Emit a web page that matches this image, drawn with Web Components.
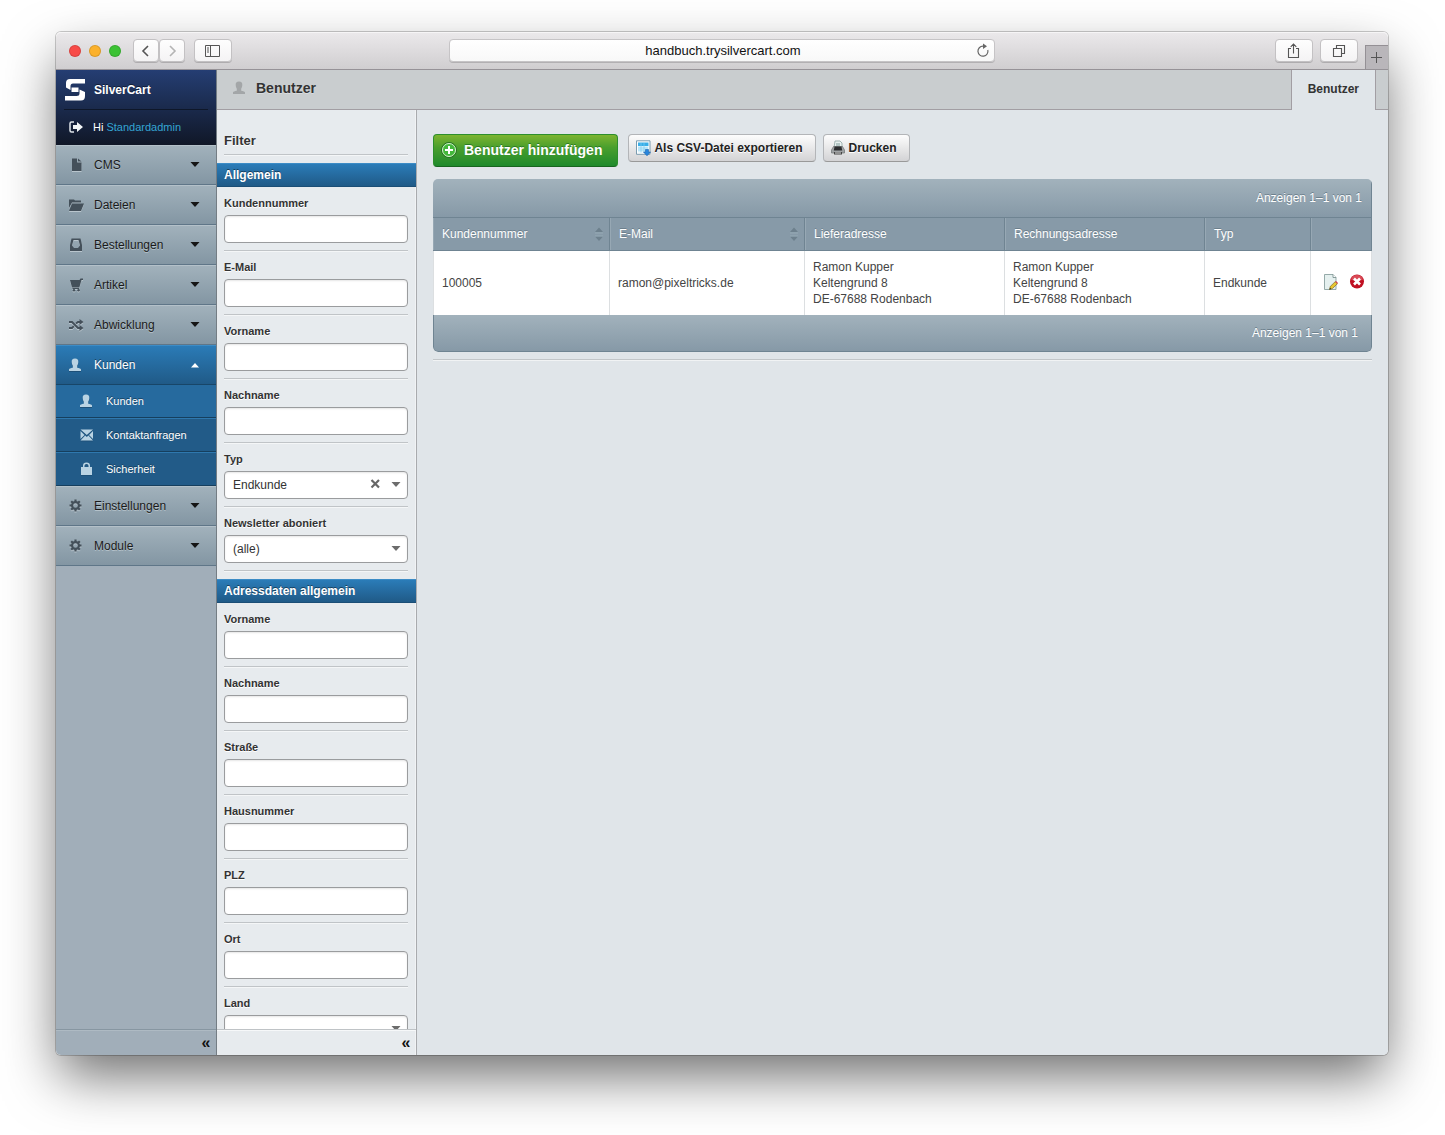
<!DOCTYPE html>
<html lang="de">
<head>
<meta charset="utf-8">
<title>SilverCart – Benutzer</title>
<style>
  body {
    margin: 0;
    box-sizing: border-box;
    height: 100vh;
    padding: 32px 57px 80px 56px;
    overflow: hidden;
    background: #fff;
    color: #333;
    font: 12px/16px "Liberation Sans", Arial, sans-serif;
    --blue: linear-gradient(#2b7cb8, #205a87);
    --steel: linear-gradient(#a2b2bc, #8396a3);
    --panel: #e7ebee;
    --page: #e0e5e9;
    --line: #a29ea3;
  }
</style>
</head>
<body>
<browser-window address="handbuch.trysilvercart.com">
  <admin-app></admin-app>
</browser-window>

<script>
const ICONS = {
  back: '<path d="M10 3 5 8l5 5" fill="none" stroke="#555" stroke-width="1.6"/>',
  forward: '<path d="M6 3l5 5-5 5" fill="none" stroke="#b4b4b4" stroke-width="1.6"/>',
  panel: '<path d="M.5 2.5h14v11H.5zM5.500 2.500v11M2 5h2M2 7h2M2 9h2" fill="none" stroke="#555"/>',
  share: '<path d="M5 5.500H2.500v9h10v-9H10M7.500 10.500V1M4.700 3.800 7.500 1l2.800 2.800" fill="none" stroke="#555" stroke-width="1.100"/>',
  tabs: '<path d="M2.500 5.500h8v8h-8zM5.500 5V2.500h8v8H11" fill="none" stroke="#555" stroke-width="1.100"/>',
  plus: '<path d="M7.500 2v11M2 7.500h11" stroke="#555"/>',
  reload: '<path d="M12.800 7A5 5 0 1 1 8 3.200h1" fill="none" stroke="#666" stroke-width="1.200"/><path d="M8 .5 12 3.200 8 6z" fill="#666"/>',
  logo: '<path d="M5 0H20V4.500H8Q5.500 4.500 5.500 7V11L1 8.500V4Q1 0 5 0zM6.500 8.500H13.500V13H6.500zM14.500 10.500 20 13V17Q20 21.500 16 21.500H0V17H11.500Q14.500 17 14.500 14.500z" fill="#fff"/>',
  logout: '<path d="M6 3H3.500Q2 3 2 4.500v7Q2 13 3.500 13H6" fill="none" stroke="#dfe5ea" stroke-width="1.500"/><path d="M5 6h4V3l6 5-6 5v-3H5z" fill="#f2f5f7"/>',
  file: '<path d="M4 1.500h5v4h4.500V14H4zM10 1.500l3.500 3H10z"/>',
  folder: '<path d="M1 2.500h5l1 1h6v2H4L1 11zM4 6.500h12L13 14H1z"/>',
  inbox: '<path d="M3.500 1.500h9L14 8v6H2V8zM5.500 3 4 8.500 6 11h4l2-2.500L10.500 3z" fill-rule="evenodd"/>',
  cart: '<path d="M2 3h9.500l1-1.500H15V3h-1.500l-2.200 7.500H4zM4.500 11H11v1H4.500z"/><circle cx="6" cy="13.300" r="1.200"/><circle cx="10.500" cy="13.300" r="1.200"/>',
  shuffle: '<path d="M1 5h3l6 6h3M1 11h3l1.800-1.800M8 6.500 10 5h3" fill="none" stroke="currentColor" stroke-width="1.900"/><path d="M11.500 2 15.500 5l-4 3zM11.500 8l4 3-4 3z"/>',
  user: '<path d="M7 1.500c2.600 0 3.400 1.400 3.300 3.500C10.200 7 9.700 8 9.200 8.700V10.500c.3.700 3.800.6 3.800 2V14H1v-1.500c0-1.400 3.500-1.300 3.800-2V8.700C4.300 8 3.800 7 3.700 5 3.600 2.900 4.400 1.500 7 1.500z"/>',
  mail: '<path d="M1.500 2.500h12.500L7.800 8zM1.500 4 5.500 8 1.500 12zM14 4V12L10 8zM6.200 8.500 7.800 10l1.600-1.500L14 13.500H1.500z"/>',
  lock: '<path d="M2 6H4V4.500q0-3 3.500-3t3.500 3V6h2v8H2zM5.500 6h4V4.700Q9.500 3 7.500 3t-2 1.700z" fill-rule="evenodd"/>',
  gear: '<path d="M7.500 1.500V4M7.500 11v2.500M1.500 7.500H4M11 7.500h2.500M3.200 3.200 5 5M10 10l1.800 1.800M3.200 11.800 5 10M10 5l1.800-1.800" stroke="currentColor" stroke-width="2.200"/><circle cx="7.500" cy="7.500" r="3.400" fill="none" stroke="currentColor" stroke-width="2.200"/>',
  down: '<path d="M3.500 5h9L8 10z"/>',
  up: '<path d="M4 10.500h8L8 6z"/>',
  clear: '<path d="M3.500 3l7.500 7.500M11 3l-7.500 7.500" stroke="#666" stroke-width="2.200"/>',
  sort: '<path d="M4 6h8L8 1.500zM4 10.500h8L8 15z" fill="#6d808d"/><path d="M4 7h8M4 10h8" stroke="#9badb8" stroke-width=".8"/>',
  add: '<circle cx="8" cy="8" r="7.500" fill="#37a52f" stroke="#2a7026"/><circle cx="8" cy="8" r="6.500" fill="#43b83a" stroke="#d6f3cd"/><path d="M8 4v8M4 8h8" stroke="#fff" stroke-width="2"/>',
  csv: '<path d="M1.500 .8h13.500v13.500H1.500z" fill="#fff" stroke="#7b9cb0"/><path d="M3 2.500h10.500v3.500H3z" fill="#38aee8"/><path d="M3 6h10.500v6.500H3z" fill="#d9f2fc"/><path d="M3 8h10M3 10h10M6 3v9.500M9 3v9.500" stroke="#7fcdf0" stroke-width=".7"/><path d="M10.500 9.500h3v2.500h2L12 15.800 8.500 12h2z" fill="#2786dc" stroke="#1b62ad" stroke-width=".6"/>',
  print: '<path d="M5 1h5l2 2v5H4z" fill="#e9f1f0" stroke="#8ea5a2" stroke-width=".8"/><path d="M6 4h4M6 6h4" stroke="#7f9b99"/><path d="M3.500 6.500h9l2 3.500v3H1.500v-3z" fill="#a0a3a5" stroke="#6f7274" stroke-width=".7"/><path d="M4.500 6.500h7l.7 4H3.800z" fill="#2c2e30"/><path d="M4 12h8v2.500H4z" fill="#444"/><path d="M5 13h6" stroke="#ddd"/>',
  edit: '<path d="M1.500 .5h8.500l3 3v12H1.500z" fill="#e5f0ef" stroke="#8aa09f" stroke-width=".9"/><path d="M10 .5v3h3" fill="#fff" stroke="#6f8685" stroke-width=".8"/><path d="M6.500 15.500 7.200 12.500 12.200 7.700 14.400 9.700 9.400 14.600z" fill="#e8c630" stroke="#6d5a1a" stroke-width=".6"/><path d="M12.200 7.700 13 7l2 2-.7.700z" fill="#d9364a"/><path d="M6.500 15.500 7 13.800 8.200 15z" fill="#222"/>',
  remove: '<circle cx="8" cy="7.500" r="7" fill="#c01022"/><path d="M2 5.500a6.300 6.300 0 0 1 12 0q-6 3-12 0z" fill="#d94a56"/><path d="M5 4.500l6 6M11 4.500l-6 6" stroke="#fff" stroke-width="2.600"/>'
};

const define = (name, template) => customElements.define(name, class extends HTMLElement {
  connectedCallback() {
    if (this.shadowRoot) return;
    const root = this.attachShadow({ mode: 'open' });
    root.innerHTML = '<style>*{box-sizing:border-box}button,input,select{font:inherit;color:inherit;margin:0}button{cursor:pointer}a{color:inherit;text-decoration:none}</style>'
      + (typeof template === 'function' ? template(this) : template);
  }
});

define('ui-icon', el => {
  const name = el.getAttribute('name');
  const logo = name === 'logo';
  return `<style>
    :host { display: block; flex: none; width: ${logo ? 20 : 16}px; height: ${logo ? 22 : 16}px; }
    svg { display: block; width: 100%; height: 100%; }
  </style><svg viewBox="0 0 ${logo ? '20 22' : '16 16'}" fill="currentColor" aria-hidden="true">${ICONS[name]}</svg>`;
});

define('tool-button', el => `<style>
    :host { display: block; }
    button {
      display: flex; align-items: center; justify-content: center;
      width: 100%; height: 23px; padding: 0;
      border: 1px solid #c3c1c3; border-radius: 4px;
      background: linear-gradient(#fefefe, #f4f3f4);
      box-shadow: 0 1px 0 #aeacae;
    }
  </style><button type="button" aria-label="${el.getAttribute('label')}"><ui-icon name="${el.getAttribute('icon')}"></ui-icon></button>`);

define('browser-window', el => `<style>
    :host {
      display: flex; flex-direction: column; height: 100%; border-radius: 5px;
      box-shadow: 0 0 0 1px rgba(0,0,0,.2), 0 24px 54px -3px rgba(0,0,0,.57);
    }
    header {
      flex: none; display: grid; grid-template-columns: 1fr 41% 1fr; align-items: center;
      height: 38px; border-bottom: 1px solid #969297; border-radius: 5px 5px 0 0;
      background: linear-gradient(#ebe9eb, #d0ced0); box-shadow: inset 0 1px #f6f5f6;
    }
    .left, .right { display: flex; align-items: center; }
    .left { padding-left: 13px; }
    .light { width: 12px; height: 12px; margin-right: 8px; border-radius: 50%; background: var(--c); box-shadow: inset 0 0 0 1px rgba(0,0,0,.13); }
    .step { width: 26px; }
    .first { margin-left: 4px; }
    .wide { width: 38px; }
    .side { margin-left: 9px; }
    .address {
      display: flex; align-items: center; height: 23px; padding: 0 3px;
      border: 1px solid #c6c4c6; border-radius: 4px; background: linear-gradient(#fff, #f8f8f8);
      box-shadow: 0 1px 0 #b2b0b2;
    }
    .address input { flex: 1; min-width: 0; border: 0; padding: 0 0 0 18px; outline: 0; background: none; font-size: 13px; color: #111; text-align: center; }
    .right { justify-content: flex-end; gap: 7px; align-self: stretch; }
    .new { align-self: flex-end; display: flex; align-items: center; justify-content: center; width: 23px; height: 24px; padding: 0; border: solid #949095; border-width: 1px 0 0 1px; background: #b9b6ba; }
    main { flex: 1; min-height: 0; display: flex; overflow: hidden; border-radius: 0 0 5px 5px; }
  </style>
  <header>
    <div class="left">
      <span class="light" style="--c:#f84b48"></span><span class="light" style="--c:#fbb12c"></span><span class="light" style="--c:#3cc234"></span>
      <tool-button class="step first" icon="back" label="Zurück"></tool-button><tool-button class="step" icon="forward" label="Vorwärts"></tool-button>
      <tool-button class="wide side" icon="panel" label="Seitenleiste"></tool-button>
    </div>
    <div class="address"><input type="text" aria-label="Adresse" value="${el.getAttribute('address')}"><ui-icon name="reload"></ui-icon></div>
    <div class="right">
      <tool-button class="wide" icon="share" label="Teilen"></tool-button>
      <tool-button class="wide" icon="tabs" label="Tabs"></tool-button>
      <button class="new" type="button" aria-label="Neuer Tab"><ui-icon name="plus"></ui-icon></button>
    </div>
  </header>
  <main><slot></slot></main>`);

define('admin-app', `<style>
    :host { flex: 1; min-width: 0; display: flex; background: var(--page); }
    .work { flex: 1; min-width: 0; display: flex; flex-direction: column; }
    .body { flex: 1; min-height: 0; display: flex; }
  </style>
  <side-nav></side-nav>
  <div class="work"><page-header></page-header>
    <div class="body"><filter-panel></filter-panel><user-list></user-list></div>
  </div>`);

define('collapse-bar', `<style>
    :host { flex: none; display: flex; justify-content: flex-end; height: 26px; padding-right: 5px; border-top: 1px solid var(--bar-line); box-shadow: inset 0 1px var(--bar-light); }
    button { width: 10px; padding: 0; border: 0; background: none; color: #111; font-size: 16px; line-height: 22px; font-weight: bold; }
  </style><button type="button" aria-label="Einklappen">«</button>`);

define('nav-item', el => {
  const sub = el.hasAttribute('sub'), active = el.hasAttribute('active'), arrow = el.getAttribute('arrow');
  const blue = sub || active;
  return `<style>
    :host { display: block; }
    a {
      display: flex; align-items: center;
      gap: 10px; height: 40px; padding: 0 13px 0 12px; color: ${blue ? '#fff' : '#1a1a1a'};
      background: ${active ? 'var(--blue)' : 'var(--steel)'};
      border-bottom: 1px solid ${active ? '#184668' : '#5f7688'};
      box-shadow: inset 0 1px ${active ? '#3c8cc6' : '#b4c1c9'};
      text-shadow: ${blue ? '0 -1px #17415f' : '0 1px #b5c2ca'};
    }
    ui-icon { color: ${blue ? '#b9d3e3' : '#44505a'}; filter: drop-shadow(0 1px ${blue ? '#1d5078' : '#b9c5cd'}); }
    span { flex: 1; }
    .arrow { color: ${blue ? '#fff' : '#151515'}; filter: none; }
    ${sub ? `a { height: 34px; gap: 11px; padding-left: 23px; font-size: 11px; background: ${active ? '#266a9e' : '#225b88'}; border-bottom-color: #163f5e; box-shadow: inset 0 1px #2f78ae; }
      :host([active]) a { height: 33px; box-shadow: none; }` : ''}
  </style><a href="#"><ui-icon name="${el.getAttribute('icon')}"></ui-icon><span><slot></slot></span>${arrow ? `<ui-icon class="arrow" name="${arrow}"></ui-icon>` : ''}</a>`;
});

define('side-nav', `<style>
    :host { flex: none; width: 161px; display: flex; flex-direction: column; background: #a1aeb9; border-right: 1px solid #747d84; --bar-line: #8796a1; --bar-light: #aebac3; }
    .brand { background: linear-gradient(#253e73, #101727); color: #fff; }
    .name { display: flex; align-items: center; gap: 9px; height: 39px; padding-left: 9px; font-weight: bold; text-shadow: 0 -1px #111d36; }
    .user { display: flex; align-items: center; gap: 9px; height: 36px; margin: 0 8px; padding: 0 0 2px 4px; border-top: 1px solid #0e1729; font-size: 11px; }
    .user a { color: #34a5d3; }
    nav { flex: 1; min-height: 0; overflow: hidden; }
  </style>
  <div class="brand">
    <div class="name"><ui-icon name="logo"></ui-icon><span>SilverCart</span></div>
    <div class="user"><ui-icon name="logout"></ui-icon><span>Hi <a href="#">Standardadmin</a></span></div>
  </div>
  <nav>
    <nav-item icon="file" arrow="down">CMS</nav-item>
    <nav-item icon="folder" arrow="down">Dateien</nav-item>
    <nav-item icon="inbox" arrow="down">Bestellungen</nav-item>
    <nav-item icon="cart" arrow="down">Artikel</nav-item>
    <nav-item icon="shuffle" arrow="down">Abwicklung</nav-item>
    <nav-item icon="user" arrow="up" active>Kunden</nav-item>
    <nav-item sub active icon="user">Kunden</nav-item>
    <nav-item sub icon="mail">Kontaktanfragen</nav-item>
    <nav-item sub icon="lock">Sicherheit</nav-item>
    <nav-item icon="gear" arrow="down">Einstellungen</nav-item>
    <nav-item icon="gear" arrow="down">Module</nav-item>
  </nav>
  <collapse-bar></collapse-bar>`);

define('page-header', `<style>
    :host { flex: none; display: flex; height: 40px; font-weight: bold; }
    .title, .tail { background: #c9cdcf; border-bottom: 1px solid var(--line); }
    .title { flex: 1; display: flex; align-items: center; gap: 8px; padding: 0 0 3px 15px; }
    .title ui-icon { color: #a3a6a8; }
    h1 { margin: 0; font-size: 14px; line-height: 16px; text-shadow: 0 1px #dadddf; }
    a { display: flex; align-items: center; padding: 0 16px 2px; border: solid var(--line); border-width: 0 1px; background: var(--page); }
    .tail { width: 12px; }
  </style>
  <div class="title"><ui-icon name="user"></ui-icon><h1>Benutzer</h1></div><a href="#">Benutzer</a><div class="tail"></div>`);

define('filter-field', el => {
  const type = el.getAttribute('type'), value = el.getAttribute('value') || '';
  return `<style>
    :host { display: block; margin: 0 8px 0 7px; padding: 8px 0 7px; border-bottom: 1px solid #c0c4c7; box-shadow: 0 1px #f4f6f7; }
    label { display: block; margin-bottom: 4px; font-size: 11px; font-weight: bold; text-shadow: 0 1px #fff; }
    input, .box { display: block; width: 100%; height: 28px; border: 1px solid #9a9c9e; border-radius: 4px; background: #fff; box-shadow: inset 0 1px 2px rgba(0,0,0,.1); }
    input { padding: 0 8px; }
    .box { display: grid; grid-template-columns: 1fr 16px 4px 16px 3px; align-items: center; }
    select { grid-area: 1 / 1 / 2 / -1; height: 26px; padding: 0 0 0 8px; border: 0; appearance: none; background: none; }
    .box button { grid-area: 1 / 2; padding: 0; border: 0; background: none; }
    .box > ui-icon { grid-area: 1 / 4; color: #6c6c6c; pointer-events: none; }
  </style>
  <label for="f">${el.getAttribute('label')}</label>
  ${type === 'select'
    ? `<div class="box"><select id="f"><option>${value}</option></select>${el.hasAttribute('clearable') ? '<button type="button" aria-label="Auswahl löschen"><ui-icon name="clear"></ui-icon></button>' : ''}<ui-icon name="down"></ui-icon></div>`
    : '<input id="f" type="text">'}`;
});

define('filter-section', el => `<style>
    :host { display: block; margin-top: 8px; }
    h3 { margin: 0; height: 24px; padding: 0 7px; font-size: 12px; line-height: 22px; color: #fff; background: var(--blue); border: solid #3c8cc6; border-width: 1px 0; border-bottom-color: #1b4e76; text-shadow: 0 -1px #17415f; }
  </style><h3>${el.getAttribute('heading')}</h3><slot></slot>`);

define('filter-panel', `<style>
    :host { flex: none; width: 200px; display: flex; flex-direction: column; background: var(--panel); border-right: 1px solid #a9abae; box-shadow: inset -1px 0 #f1f3f5; --bar-line: #bfc3c6; --bar-light: #f6f8f9; }
    .scroll { flex: 1; min-height: 0; overflow: hidden; }
    h2 { margin: 0 8px 0 7px; height: 45px; padding-top: 23px; font-size: 13px; line-height: 16px; border-bottom: 1px solid #c0c4c7; box-shadow: 0 1px #f4f6f7; text-shadow: 0 1px #fff; }
  </style>
  <form class="scroll">
    <h2>Filter</h2>
    <filter-section heading="Allgemein">
      <filter-field label="Kundennummer"></filter-field>
      <filter-field label="E-Mail"></filter-field>
      <filter-field label="Vorname"></filter-field>
      <filter-field label="Nachname"></filter-field>
      <filter-field label="Typ" type="select" value="Endkunde" clearable></filter-field>
      <filter-field label="Newsletter aboniert" type="select" value="(alle)"></filter-field>
    </filter-section>
    <filter-section heading="Adressdaten allgemein">
      <filter-field label="Vorname"></filter-field>
      <filter-field label="Nachname"></filter-field>
      <filter-field label="Straße"></filter-field>
      <filter-field label="Hausnummer"></filter-field>
      <filter-field label="PLZ"></filter-field>
      <filter-field label="Ort"></filter-field>
      <filter-field label="Land" type="select"></filter-field>
    </filter-section>
  </form>
  <collapse-bar></collapse-bar>`);

define('action-button', el => `<style>
    :host { display: block; }
    button {
      display: flex; align-items: center; gap: 3px; height: 28px; padding: 0 12px 0 6px;
      border: 1px solid #b3b5b8; border-bottom-color: #999; border-radius: 4px;
      background: linear-gradient(#fdfdfd, #d3d3d5); color: #222; font-weight: bold; white-space: nowrap; text-shadow: 0 1px #fff;
    }
    :host([primary]) button {
      height: 33px; gap: 7px; padding: 0 15px 1px 7px; font-size: 14px; color: #fff;
      border-color: #2d8f2c; border-bottom-color: #17651f; background: linear-gradient(#7db42f, #4a9f2d 40%, #1f8a2c); text-shadow: 0 -1px #2b7a25;
    }
  </style><button type="button"><ui-icon name="${el.getAttribute('icon')}"></ui-icon><slot></slot></button>`);

define('user-list', `<style>
    :host { flex: 1; min-width: 0; padding: 24px 16px; }
    .actions { display: flex; align-items: flex-start; gap: 10px; margin-bottom: 12px; }
    .more { display: flex; gap: 7px; }
  </style>
  <div class="actions">
    <action-button primary icon="add">Benutzer hinzufügen</action-button>
    <div class="more"><action-button icon="csv">Als CSV-Datei exportieren</action-button><action-button icon="print">Drucken</action-button></div>
  </div>
  <user-grid></user-grid>`);

define('user-grid', `<style>
    :host { display: block; padding-bottom: 7px; border-bottom: 1px solid #c2c6c9; box-shadow: 0 1px #f1f3f4; }
    .frame { overflow: hidden; border-radius: 5px; }
    table { width: 100%; table-layout: fixed; border-collapse: separate; border-spacing: 0; }
    th { text-align: left; font-weight: normal; color: #fff; padding: 0 9px; background: #879aa8; border: 0 solid #6f8492; border-width: 0 1px 1px 0; box-shadow: inset 1px 0 #97a8b4; text-shadow: 0 -1px #6c7f8c; height: 33px; }
    .sum { height: 39px; text-align: right; background: linear-gradient(#a2b2bc, #8699a7); box-shadow: none; }
    tfoot .sum { height: 37px; padding-right: 13px; border-left-width: 1px; border-radius: 0 0 5px 5px; }
    .sort { display: flex; align-items: center; justify-content: space-between; margin-right: -7px; }
    td { height: 64px; padding: 8px; background: #fff; border-right: 1px solid #dcdfe1; color: #444; }
    td:first-child { border-left: 1px solid #dcdfe1; }
    td.tools { padding: 5px 6px 8px 12px; }
    .tools div { display: flex; gap: 10px; }
    .tools button { padding: 0; border: 0; background: none; }
  </style>
  <div class="frame"><table>
    <colgroup><col style="width:177px"><col style="width:195px"><col style="width:200px"><col style="width:200px"><col style="width:106px"><col style="width:61px"></colgroup>
    <thead>
      <tr><th class="sum" colspan="6">Anzeigen 1–1 von 1</th></tr>
      <tr><th><div class="sort">Kundennummer<ui-icon name="sort"></ui-icon></div></th><th><div class="sort">E-Mail<ui-icon name="sort"></ui-icon></div></th><th>Lieferadresse</th><th>Rechnungsadresse</th><th>Typ</th><th></th></tr>
    </thead>
    <tbody><tr>
      <td>100005</td><td>ramon@pixeltricks.de</td>
      <td>Ramon Kupper<br>Keltengrund 8<br>DE-67688 Rodenbach</td>
      <td>Ramon Kupper<br>Keltengrund 8<br>DE-67688 Rodenbach</td>
      <td>Endkunde</td>
      <td class="tools"><div><button type="button" aria-label="Bearbeiten"><ui-icon name="edit"></ui-icon></button><button type="button" aria-label="Löschen"><ui-icon name="remove"></ui-icon></button></div></td>
    </tr></tbody>
    <tfoot><tr><th class="sum" colspan="6">Anzeigen 1–1 von 1</th></tr></tfoot>
  </table></div>`);
</script>
</body>
</html>
